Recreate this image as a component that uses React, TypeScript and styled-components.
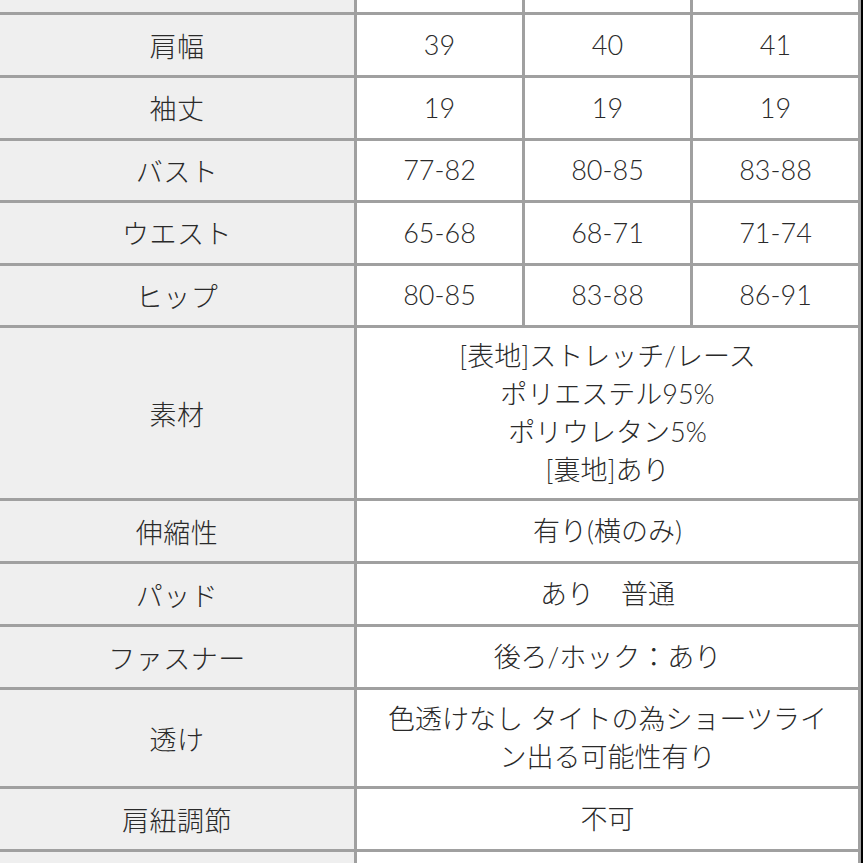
import React from "react";
import styled, { createGlobalStyle } from "styled-components";

const Global = createGlobalStyle`
  html, body {
    margin: 0;
    padding: 0;
    background: #000;
    overflow: hidden;
  }
  #root {
    width: 863px;
    height: 863px;
    overflow: hidden;
  }
`;

const Table = styled.div`
  display: flex;
  flex-direction: column;
  gap: 3px;
  width: 858px;
  padding-right: 3px;
  margin-top: -48px;
  background: #a0a0a0;
  font-family: Lato, "Noto Sans CJK JP", "Noto Sans", sans-serif;
  font-size: 27px;
  font-weight: 300;
  color: #2a2a2a;
`;

const Row = styled.div<{ $h: number }>`
  display: grid;
  grid-template-columns: 354px 165px 165px 165px;
  column-gap: 3px;
  height: ${(p) => p.$h}px;
`;

const Label = styled.div`
  display: flex;
  align-items: center;
  justify-content: center;
  background: #efefef;
  font-family: "Noto Sans CJK JP", sans-serif;
  font-weight: 300;
  letter-spacing: 0.5px;
`;

const Cell = styled.div<{ $span?: number }>`
  display: flex;
  align-items: center;
  justify-content: center;
  text-align: center;
  background: #fff;
  line-height: 1.4;
  font-weight: 300;
  grid-column: span ${(p) => p.$span ?? 1};
`;

type RowData = { id: string; label: string; h: number; values?: string[]; merged?: React.ReactNode };

const rows: RowData[] = [
  { id: "top", label: "", h: 60, values: ["", "", ""] },
  { id: "shoulder", label: "肩幅", h: 60, values: ["39", "40", "41"] },
  { id: "sleeve", label: "袖丈", h: 59.5, values: ["19", "19", "19"] },
  { id: "bust", label: "バスト", h: 59.5, values: ["77-82", "80-85", "83-88"] },
  { id: "waist", label: "ウエスト", h: 59.5, values: ["65-68", "68-71", "71-74"] },
  { id: "hip", label: "ヒップ", h: 59.5, values: ["80-85", "83-88", "86-91"] },
  {
    id: "material",
    label: "素材",
    h: 170,
    merged: (
      <>
        [表地]ストレッチ/レース
        <br />
        ポリエステル95%
        <br />
        ポリウレタン5%
        <br />
        [裏地]あり
      </>
    ),
  },
  { id: "stretch", label: "伸縮性", h: 60, merged: "有り(横のみ)" },
  { id: "pad", label: "パッド", h: 60, merged: "あり　普通" },
  { id: "zip", label: "ファスナー", h: 60, merged: "後ろ/ホック：あり" },
  {
    id: "sheer",
    label: "透け",
    h: 96,
    merged: (
      <>
        色透けなし タイトの為ショーツライ
        <br />
        ン出る可能性有り
      </>
    ),
  },
  { id: "strap", label: "肩紐調節", h: 60, merged: "不可" },
  { id: "bottom", label: "", h: 60, merged: "" },
];

export default function App() {
  return (
    <>
      <Global />
      <Table>
        {rows.map((r) => (
          <Row key={r.id} $h={r.h}>
            <Label>{r.label}</Label>
            {r.values ? (
              r.values.map((v, i) => <Cell key={i}>{v}</Cell>)
            ) : (
              <Cell $span={3}>{r.merged}</Cell>
            )}
          </Row>
        ))}
      </Table>
    </>
  );
}
